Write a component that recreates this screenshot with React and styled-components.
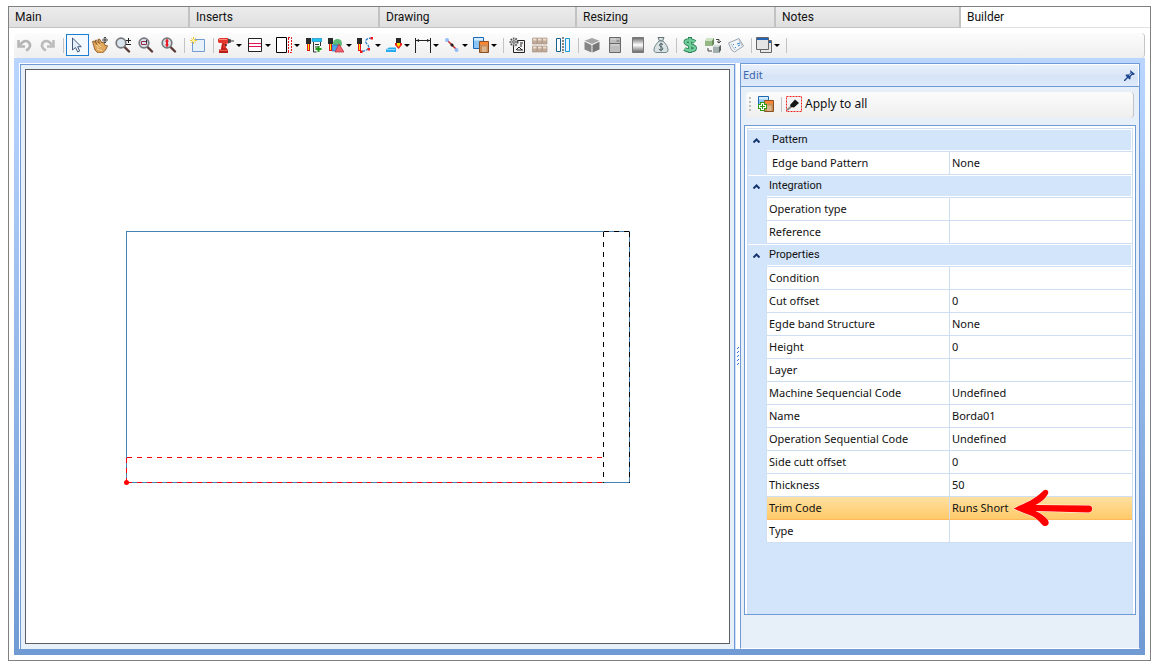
import React from "react";
import styled, { createGlobalStyle, css } from "styled-components";

const GlobalStyle = createGlobalStyle`
  * { box-sizing: border-box; }
  body {
    margin: 0;
    background: #fff;
    color: #111;
    font: 11px/16px "Noto Sans", "Open Sans", sans-serif;
  }
  button { font: inherit; color: inherit; }
`;

const BLUE = "#6f9ad6";
const PANEL = "#e7eff9";
const FILL = "#d3e5fb";
const LINE = "#cfdff3";

const Page = styled.div`
  display: flex;
  min-height: 100vh;
  padding: 6px 15px 9px 8px;
`;

const Window = styled.main`
  flex: 1;
  min-width: 0;
  display: flex;
  flex-direction: column;
  border: 1px solid #808080;
`;

const TabBar = styled.nav`
  display: grid;
  grid-template-columns: 181fr 190fr 197fr 199fr 185fr 189fr;
  height: 21px;
`;

const Tab = styled.button`
  min-width: 0;
  padding: 0 6px;
  border: 0;
  border-right: ${(p) => (p.$active ? "0" : "2px solid #c2c2c2")};
  border-bottom: 1px solid ${(p) => (p.$active ? "#e2e2e2" : "#c2c2c2")};
  background: ${(p) => (p.$active ? "#fff" : "linear-gradient(#ececec, #dfdfdf)")};
  font-family: Roboto, sans-serif;
  font-size: 12px;
  line-height: 20px;
  text-align: left;
`;

const Body = styled.div`
  flex: 1;
  display: flex;
  flex-direction: column;
  padding: 5px 5px;
`;

const strip = css`
  display: flex;
  align-items: center;
  background: linear-gradient(#fcfcfc, #efefef);
  border-radius: 4px;
  border-right: 1px solid #c4c4c4;
`;

const Toolbar = styled.div`
  ${strip}
  height: 25px;
  padding-bottom: 1px;
`;

const ToolButton = styled.button`
  flex: none;
  display: flex;
  align-items: center;
  gap: 2px;
  width: ${(p) => (p.$menu ? 29 : 23)}px;
  height: 22px;
  padding: 0 0 0 ${(p) => (p.$menu ? 1 : 2)}px;
  border: 1px solid ${(p) => (p.$active ? "#1a7fd4" : "transparent")};
  background: ${(p) => (p.$active ? "#f4f9fe" : "transparent")};
`;

const Caret = styled.span`
  border: 3px solid transparent;
  border-top-color: #000;
  border-bottom: 0;
`;

const Separator = styled.span`
  flex: none;
  width: 1px;
  height: 15px;
  margin: 0 2px 0 3px;
  background: #c3c3c3;
`;

const Frame = styled.div`
  flex: 1;
  display: flex;
  padding: 5px 5px 6px;
  background: linear-gradient(#bad6ff, #6f9ad3);
`;

const Workspace = styled.div`
  flex: 1;
  min-width: 0;
  display: flex;
  background: #fff;
`;

const DrawingPanel = styled.section`
  flex: 1;
  min-width: 0;
  display: flex;
  margin: 1px 0 0 1px;
  padding: 4px 4px 5px;
  border: 1px solid ${BLUE};
  border-bottom: 0;
  background: ${PANEL};
`;

const Canvas = styled.div`
  flex: 1;
  min-width: 0;
  display: flex;
  align-items: center;
  justify-content: center;
  border: 1px solid #5f6066;
  background: #fff;
  overflow: hidden;
`;

const Splitter = styled.div`
  flex: none;
  width: 5px;
  display: flex;
  align-items: center;
  border-left: 1px solid #cfe0fa;
`;

const EditPanel = styled.aside`
  flex: none;
  width: 400px;
  display: flex;
  flex-direction: column;
  border: 1px solid ${BLUE};
  border-bottom-color: #fff;
  background: ${PANEL};
`;

const PanelHeader = styled.header`
  display: flex;
  align-items: center;
  justify-content: space-between;
  height: 23px;
  padding: 0 4px 0 2px;
  border-bottom: 1px solid ${BLUE};
  box-shadow: inset 0 1px #fff, inset -1px 0 #fff;
  background: linear-gradient(#eaf1fb, #d6e4f7 60%, #dfebfa);
`;

const PanelTitle = styled.h2`
  margin: 0;
  color: #3c66ad;
  font-size: 11px;
  font-weight: 400;
`;

const PinButton = styled.button`
  display: flex;
  padding: 0;
  border: 0;
  background: none;
`;

const PanelToolbar = styled.div`
  ${strip}
  height: 26px;
  margin: 5px 5px 0;
  padding: 0 0 2px 3px;
`;

const Grip = styled.svg`
  flex: none;
  margin-right: 4px;
`;

const ApplyButton = styled.button`
  display: flex;
  align-items: center;
  gap: 3px;
  padding: 0;
  border: 0;
  margin-left: 2px;
  background: none;
  font-size: 12px;
`;

const Properties = styled.div`
  flex: 1;
  margin: 7px 3px 33px;
  padding: 2px 2px 0;
  border: 1px solid ${BLUE};
  background: #fff;
  display: flex;
`;

const PropertyArea = styled.div`
  flex: 1;
  border: 1px solid ${LINE};
  border-bottom: 0;
  background: ${FILL};
`;

const Table = styled.table`
  width: 100%;
  table-layout: fixed;
  border-collapse: separate;
  border-spacing: 0;
`;

const GutterCol = styled.col`
  width: 19px;
`;
const NameCol = styled.col`
  width: 183px;
`;

const Gutter = styled.td`
  height: 23px;
  padding: 0;
  background: ${FILL};
  box-shadow: ${(p) => (p.$head ? "inset 0 1px #fff" : `inset -1px 0 ${LINE}`)};
`;

const Category = styled.th`
  height: 23px;
  padding: 0 0 0 ${(p) => (p.$deep ? 5 : 2)}px;
  border-bottom: 1px solid ${LINE};
  box-shadow: inset 0 1px #fff, inset 0 -1px #fff, inset -1px 0 #fff;
  font-family: Roboto, sans-serif;
  font-weight: 400;
  text-align: left;
`;

const rowFill = css`
  background: ${(p) => (p.$selected ? "linear-gradient(#ffe0a0, #ffca68)" : "#fff")};
  border-bottom: 1px solid ${(p) => (p.$selected ? "#ffb95c" : LINE)};
`;

const Name = styled.th`
  ${rowFill}
  height: 23px;
  padding: 0 0 0 ${(p) => (p.$deep ? 5 : 2)}px;
  border-right: 1px solid ${LINE};
  font-weight: 400;
  text-align: left;
  white-space: nowrap;
`;

const Value = styled.td`
  ${rowFill}
  position: ${(p) => (p.$selected ? "relative" : "static")};
  z-index: ${(p) => (p.$selected ? 1 : "auto")};
  padding: 0 2px;
`;

const Pointer = styled.svg`
  position: absolute;
  left: 63px;
  top: -8px;
  overflow: visible;
`;

const CollapseButton = styled.button`
  display: flex;
  align-items: center;
  justify-content: center;
  width: 17px;
  height: 20px;
  padding: 0;
  border: 0;
  background: none;
`;

const Drawing = styled.svg`
  flex: none;
  overflow: visible;
`;

const Icon = ({ children }) => (
  <svg width="16" height="16" viewBox="0 0 16 16" fill="none" aria-hidden="true">
    {children}
  </svg>
);

const Lens = ({ children }) => (
  <Icon>
    <path d="M9.500 10l4.500 4.500" stroke="#5b3a36" strokeWidth="2.400" strokeLinecap="round" />
    <circle cx="6" cy="6" r="4.800" fill="#d9e4ec" stroke="#77787c" strokeWidth="1.700" />
    {children}
  </Icon>
);

const Tip = ({ x = 0, y = 0 }) => (
  <g transform={`translate(${x} ${y})`}>
    <path d="M0 0h5v6H0z" fill="#292929" />
    <path d="M1 6h3v7H1z" fill="#e11b1b" />
    <path d="M2 6h1v6H2z" fill="#ffe500" />
  </g>
);

const Moulding = () => (
  <>
    <path d="M.5.500h10v11H.5z" fill="#8cc4f5" stroke="#1b68b4" />
    <path d="M1 1h9v2.500H1z" fill="#d5ecff" />
    <path d="M6.500 4.500h9v11h-9z" fill="#c98d57" stroke="#8a4f22" />
    <path d="M7 5h8v2.500H7z" fill="#ff8734" />
    <path d="M9 9.500h4.500V15H9z" fill="#dcb48c" />
  </>
);

const ICONS = {
  undo: (
    <Icon>
      <path d="M1.500 3v6.500H8" stroke="#b5b5b5" strokeWidth="2.500" />
      <path d="M3 8c2.500-4 6-5 8.500-3 3 3 1.500 6.500-2.500 8.500" stroke="#b5b5b5" strokeWidth="2.600" />
    </Icon>
  ),
  redo: (
    <Icon>
      <path d="M13.500 3v6.500H7" stroke="#bcbcbc" strokeWidth="2.500" />
      <path d="M12 8c-2.500-4-6-5-8.500-3-3 3-1.500 6.500 2.500 8.500" stroke="#bcbcbc" strokeWidth="2.600" />
    </Icon>
  ),
  cursor: (
    <Icon>
      <path d="M3.500 1v12l3-2.500 2.200 4.500 2-1-2-4.300h3.600z" fill="#e5edf8" stroke="#455878" />
    </Icon>
  ),
  hand: (
    <Icon>
      <path d="M.5 4.500L2 4l3 3.500L3 3.500 4.500 3l3 3.500L6 2.500 7.500 2l2.500 4 .5-1 1.500 1 1.500 3 1-1 1 1-2 4-3 3H6l-3-3z" fill="#e0a85c" stroke="#8a5621" strokeWidth=".9" />
      <path d="M4 8l3 3M6 6.500l3 3.500M5 12l5 1.500" stroke="#f7d69b" />
      <path d="M13 0v6M10 3h6" stroke="#333" />
      <path d="M11.500 1.500L13 0l1.500 1.500M11.500 4.500L13 6l1.500-1.500" stroke="#333" strokeWidth=".8" />
    </Icon>
  ),
  zoomPm: (
    <Lens>
      <path d="M11 3.500h5M13.500 1v5M11 7.500h5" stroke="#222" />
    </Lens>
  ),
  zoomWin: (
    <Lens>
      <path d="M3.500 4.500h5v3h-5z" stroke="#9d2948" />
      <path d="M8.500 3v3" stroke="#333" />
    </Lens>
  ),
  zoomFit: (
    <Lens>
      <path d="M6 2.500v7" stroke="#ed1c24" strokeWidth="2" />
      <path d="M3.800 4.500L6 2l2.200 2.500zM3.800 7.500L6 10l2.200-2.500z" fill="#ed1c24" />
    </Lens>
  ),
  blank: (
    <Icon>
      <path d="M2.500 2.500h12v12h-12z" fill="#e6f1fc" stroke="#719bd1" />
      <path d="M3.500 0v7M0 3.500h7M1.200 1.200l4.600 4.600M5.800 1.200L1.200 5.800" stroke="#f0c335" />
      <circle cx="3.500" cy="3.500" r="1.500" fill="#fff5a7" />
    </Icon>
  ),
  drill: (
    <Icon>
      <path d="M0 2l2-1h8v5.500H8.500L8 11h1v2H3V11l1-5H1L0 5z" fill="#e5362c" />
      <path d="M1 2.500h8" stroke="#ff8d80" />
      <path d="M5 6.500l-.5 5M3 12h5" stroke="#a81d17" />
      <path d="M8 7v2" stroke="#333" strokeWidth="1.500" />
      <path d="M10 1.500l3 1v3l-3 1z" fill="#4a4a4a" />
      <path d="M13 4h3" stroke="#777" strokeWidth="1.500" />
      <path d="M1 12.500h9V16H1z" fill="#b51f18" />
      <path d="M1.500 13.500h8" stroke="#ee5a4e" />
    </Icon>
  ),
  band: (
    <Icon>
      <path d="M1.500 1.500h13v13h-13z" fill="#fff" stroke="#222" />
      <path d="M2 6.500h12M2 9.500h12" stroke="#e71357" />
    </Icon>
  ),
  edge: (
    <Icon>
      <path d="M.5.500h10v15H.5z" fill="#fff" stroke="#000" />
      <path d="M12 .5h3.500v15H12" stroke="#e71313" strokeDasharray="2 1" />
      <path d="M12.500 1v14" stroke="#e71313" strokeDasharray="2 1" />
    </Icon>
  ),
  addTool: (
    <Icon>
      <Tip y={1} />
      <path d="M6 1.500h10v3H6z" fill="#19c6f4" stroke="#1278b4" strokeWidth=".6" />
      <path d="M7.500 5v10h3M14.500 5v4M9 7.500h4M9 10h3" stroke="#333" />
      <path d="M12.500 9v6M9.500 12h6" stroke="#219a19" strokeWidth="2" />
    </Icon>
  ),
  shapes: (
    <Icon>
      <circle cx="9.500" cy="6.500" r="4.500" fill="#5bbd77" />
      <path d="M4 8h6v6H4z" fill="#4aa5ed" stroke="#246fb4" strokeWidth=".7" />
      <path d="M11 7l5 8H7z" fill="#ed6571" stroke="#b62736" strokeWidth=".7" />
      <Tip x={0} y={1} />
    </Icon>
  ),
  path: (
    <Icon>
      <Tip y={1} />
      <path d="M15 1c-6 0-8 3-5 6s3 6-6 7.500" stroke="#247bd0" strokeWidth="1.200" strokeDasharray="3 1" />
      <path d="M13.500 0H16v2.500h-2.500zM10.500 11H13v2.500h-2.500zM3 13.500h2.500V16H3z" fill="#f01818" />
    </Icon>
  ),
  surface: (
    <Icon>
      <path d="M0 12.500l3-2h7v4.500H0z" fill="#28aaf3" />
      <path d="M1 12.500h8" stroke="#8bdbff" />
      <path d="M10 1h5v5h-5z" fill="#292929" />
      <path d="M9 6h7v2l-3.500 4L9 8z" fill="#ef1c1c" />
      <path d="M11 6h3v2l-1.500 2L11 8z" fill="#ffe500" />
    </Icon>
  ),
  dimension: (
    <Icon>
      <path d="M.5 1v15M15.500 1v15M1 3.500h14" stroke="#222" />
      <path d="M1 3.500L4 2v3zM15 3.500L12 2v3z" fill="#222" />
    </Icon>
  ),
  line: (
    <Icon>
      <path d="M3 3l10 10" stroke="#c62830" strokeWidth="1.500" />
      <path d="M7 7l2 2" stroke="#222" strokeWidth="2.500" />
      <circle cx="3" cy="3" r="2" fill="#94bdf5" />
      <circle cx="12.500" cy="13" r="2" fill="#94bdf5" />
    </Icon>
  ),
  moulding: (
    <Icon>
      <Moulding />
    </Icon>
  ),
  gearPlan: (
    <Icon>
      <path d="M4.500 3.500h11v12h-11z" fill="#f4f4f4" stroke="#222" />
      <path d="M7 13l3-3 3 3M12 7v3M8 13h6M11 6h3" stroke="#222" />
      <circle cx="5" cy="5" r="3.500" fill="#ddd" stroke="#555" strokeWidth="2" strokeDasharray="1.500 1" />
      <circle cx="5" cy="5" r="1.300" fill="#fff" stroke="#555" />
    </Icon>
  ),
  boxes: (
    <Icon>
      {[1, 9].map((y) =>
        [0, 5, 10].map((x) => (
          <g key={`${x}-${y}`}>
            <path d={`M${x + 0.5} ${y}h4.500v6h-4.500z`} fill="#c2ab98" stroke="#9d8777" strokeWidth=".6" />
            <path d={`M${x + 1} ${y + 1.5}h3.500`} stroke="#eadccf" strokeWidth="2" />
          </g>
        ))
      )}
    </Icon>
  ),
  mirror: (
    <Icon>
      <path d="M1.500 1.500h4v13h-4z" fill="#fff" stroke="#17628d" />
      <path d="M10.500 1.500h4v13h-4z" fill="#e4f5ff" stroke="#199ae0" />
      <path d="M8 0v16" stroke="#111" strokeDasharray="2 1" />
    </Icon>
  ),
  cube: (
    <Icon>
      <path d="M8 1l7.500 2.700L8 7 .5 3.700z" fill="#a5a5a5" />
      <path d="M.5 4.700L7.500 8v7.500L.5 12.500z" fill="#858585" />
      <path d="M15.500 4.700L8.500 8v7.500l7-3z" fill="#777" />
    </Icon>
  ),
  fridge: (
    <Icon>
      <path d="M2.500.5h11v15h-11z" fill="#bdbdbd" stroke="#696969" />
      <path d="M3 6.500h10M9.500 4h3" stroke="#666" />
      <path d="M4 2h5M4 8h8" stroke="#ddd" />
    </Icon>
  ),
  steel: (
    <Icon>
      <defs>
        <linearGradient id="steel" x2="0" y2="1">
          <stop stopColor="#666" />
          <stop offset=".5" stopColor="#fff" />
          <stop offset="1" stopColor="#606060" />
        </linearGradient>
      </defs>
      <path d="M2.500.5h11v15h-11z" fill="url(#steel)" stroke="#777" />
    </Icon>
  ),
  bag: (
    <Icon>
      <path d="M5 .5h6L9.500 4h-3z" fill="#d7dedf" stroke="#667578" />
      <path d="M6 4h4c3 3 5 6 5 9 0 2-1 2.500-3 2.500H4C2 15.500 1 15 1 13c0-3 2-6 5-9z" fill="#dae2e3" stroke="#71858a" />
      <path d="M10 7.500C8 6 6 7 6.500 8.500S10 10 9.800 11.800 7 13.500 5.800 12M8 5.800v8.500" stroke="#465d63" />
    </Icon>
  ),
  dollar: (
    <Icon>
      <path d="M13 5C10 2.500 3.500 2.500 3.500 5.300S13 8 13 11s-7 3.500-10.500.8M8 0v16" stroke="#2c7d56" strokeWidth="4" />
      <path d="M13 5C10 2.500 3.500 2.500 3.500 5.300S13 8 13 11s-7 3.500-10.500.8M8 1v14" stroke="#6fcf9a" strokeWidth="2.400" />
    </Icon>
  ),
  swapBoxes: (
    <Icon>
      <path d="M0 4l2-3h7v6L7 9H0z" fill="#94b784" />
      <path d="M0 4l2-3h7L7 4z" fill="#cfe3c5" />
      <path d="M7 4l2-3v6L7 9z" fill="#6a8a5c" />
      <path d="M8 10l2-2h6v5l-2 3H8z" fill="#a3afad" />
      <path d="M8 10l2-2h6l-2 2z" fill="#d5dedc" />
      <path d="M14 10l2-2v5l-2 3z" fill="#56625f" />
      <path d="M11 2.500h3V6M12 4.500L14 6l2-2M3 11v3h4" stroke="#444" />
    </Icon>
  ),
  tag: (
    <Icon>
      <path d="M.5 6L11 1.500l4.500 7.500-9 6-3-2z" fill="#f1f5f8" stroke="#9aa5b0" />
      <path d="M3 7l4 6M11 3l3 6" stroke="#b8c1c9" />
      <path d="M5 7l1 1M7 10l1 1M9 7l3-1M10 9l2-1" stroke="#3985d1" />
    </Icon>
  ),
  windows: (
    <Icon>
      <path d="M4.500 3.500h11v12h-11z" fill="#e7e7e7" stroke="#666" />
      <path d="M5 4h10v2H5z" fill="#2763b3" />
      <path d="M.5.500h12v12H.5z" fill="#e5e5e5" stroke="#666" />
      <path d="M1 1h11v2H1z" fill="#2763b3" />
    </Icon>
  ),
  addMoulding: (
    <Icon>
      <Moulding />
      <path d="M4.500 6v9M0 10.500h9" stroke="#2f9a12" strokeWidth="5" />
      <path d="M4.500 7v7M1 10.500h7" stroke="#fff" strokeWidth="3" />
      <path d="M4.500 8v5M2 10.500h5" stroke="#2f9a12" />
    </Icon>
  ),
  brush: (
    <Icon>
      <path d="M.5.500h15v15H.5z" fill="#f3f3f3" stroke="#f32020" strokeDasharray="2 1" />
      <path d="M1 14l5-4" stroke="#888" strokeWidth="2" />
      <path d="M4 9l5-5.500 4 3.500-5 4.500-3-.5z" fill="#161616" />
    </Icon>
  ),
};

const TOOLS = [
  { icon: "undo", label: "Undo" },
  { icon: "redo", label: "Redo" },
  null,
  { icon: "cursor", label: "Select", active: true },
  { icon: "hand", label: "Pan" },
  { icon: "zoomPm", label: "Zoom" },
  { icon: "zoomWin", label: "Zoom window" },
  { icon: "zoomFit", label: "Zoom extents" },
  null,
  { icon: "blank", label: "New" },
  null,
  { icon: "drill", label: "Drilling", menu: true },
  { icon: "band", label: "Groove", menu: true },
  { icon: "edge", label: "Edge band", menu: true },
  { icon: "addTool", label: "Add machining" },
  { icon: "shapes", label: "Shapes", menu: true },
  { icon: "path", label: "Path", menu: true },
  { icon: "surface", label: "Surface", menu: true },
  { icon: "dimension", label: "Dimension", menu: true },
  { icon: "line", label: "Line", menu: true },
  { icon: "moulding", label: "Layers", menu: true },
  null,
  { icon: "gearPlan", label: "Settings" },
  { icon: "boxes", label: "Materials" },
  { icon: "mirror", label: "Mirror" },
  null,
  { icon: "cube", label: "Module" },
  { icon: "fridge", label: "Appliance" },
  { icon: "steel", label: "Finish" },
  { icon: "bag", label: "Budget" },
  null,
  { icon: "dollar", label: "Price" },
  { icon: "swapBoxes", label: "Replace" },
  { icon: "tag", label: "Label" },
  null,
  { icon: "windows", label: "Windows", menu: true },
  null,
];

const TABS = ["Main", "Inserts", "Drawing", "Resizing", "Notes", "Builder"];

const GROUPS = [
  { title: "Pattern", deep: true, rows: [["Edge band Pattern", "None"]] },
  { title: "Integration", rows: [["Operation type", ""], ["Reference", ""]] },
  {
    title: "Properties",
    rows: [
      ["Condition", ""],
      ["Cut offset", "0"],
      ["Egde band Structure", "None"],
      ["Height", "0"],
      ["Layer", ""],
      ["Machine Sequencial Code", "Undefined"],
      ["Name", "Borda01"],
      ["Operation Sequential Code", "Undefined"],
      ["Side cutt offset", "0"],
      ["Thickness", "50"],
      ["Trim Code", "Runs Short"],
      ["Type", ""],
    ],
  },
];

const SELECTED = "Trim Code";

const Tool = ({ icon, label, active, menu }) => (
  <ToolButton type="button" aria-label={label} aria-haspopup={menu ? "menu" : undefined} $active={active} $menu={menu}>
    {ICONS[icon]}
    {menu && <Caret />}
  </ToolButton>
);

const PartDrawing = () => (
  <Drawing width="505" height="253" viewBox="0 0 505 253" fill="none" role="img" aria-label="Part outline">
    <g shapeRendering="crispEdges">
      <rect x="1.500" y="1.500" width="503" height="251" stroke="#4682b4" />
      <path d="M478.500 1.500v251M504.500 1.500v251M478.500 1.500h26" stroke="#000" strokeDasharray="5 5" />
      <path d="M1.500 227.500h477M1.500 252.500h477M1.500 227.500v25" stroke="#f00" strokeDasharray="5 5" />
    </g>
    <circle cx="1.500" cy="252.500" r="2.500" fill="#f00" />
  </Drawing>
);

const RedPointer = () => (
  <Pointer width="82" height="38" viewBox="0 0 82 38" aria-hidden="true">
    <path
      d="M.5 19.500C12 14 21 11 29 3c2-2 4-3 5.500-1.500 2 2 0 4.500-2 7C30 11.500 26 14 22.500 16l53 .5c5 0 5 6.500 0 7L22.500 22c5 2 9 5 12 8.500 3 4 0 8-4.500 6-3-3-5-6-10-9-6-3-13-4.500-19.500-8z"
      fill="#f00"
      stroke="#fff"
      strokeWidth="1"
      paintOrder="stroke"
    />
  </Pointer>
);

export default function App() {
  return (
    <>
      <GlobalStyle />
      <Page>
        <Window>
          <TabBar>
            {TABS.map((label) => (
              <Tab key={label} type="button" $active={label === "Builder"}>
                {label}
              </Tab>
            ))}
          </TabBar>
          <Body>
            <Toolbar role="toolbar">
              {TOOLS.map((tool, i) => (tool ? <Tool key={i} {...tool} /> : <Separator key={i} />))}
            </Toolbar>
            <Frame>
              <Workspace>
                <DrawingPanel>
                  <Canvas>
                    <PartDrawing />
                  </Canvas>
                </DrawingPanel>
                <Splitter role="separator" aria-orientation="vertical">
                  <svg width="4" height="20" viewBox="0 0 4 20" aria-hidden="true">
                    {[1, 5, 9, 13, 17].map((y) => (
                      <path key={y} d={`M1 ${y + 1}h1v1H1zM2 ${y}h1v1H2z`} fill="#2f6fd0" />
                    ))}
                  </svg>
                </Splitter>
                <EditPanel>
                  <PanelHeader>
                    <PanelTitle>Edit</PanelTitle>
                    <PinButton type="button" aria-label="Pin panel">
                      <svg width="11" height="11" viewBox="0 0 11 11" aria-hidden="true">
                        <path d="M6 0l5 4-1.500 1L8 5 6.500 7v2L5.500 9.500 4 8 1 11H0v-1l3-3-1.500-1.500L2 4.500h2.500L6.500 3z" fill="#1c458f" />
                        <path d="M5 5.500L7.500 3.500" stroke="#dbe7f8" />
                      </svg>
                    </PinButton>
                  </PanelHeader>
                  <PanelToolbar role="toolbar">
                    <Grip width="2" height="16" viewBox="0 0 2 16" aria-hidden="true">
                      <path d="M0 1h2v2H0zM0 5h2v2H0zM0 9h2v2H0zM0 13h2v2H0z" fill="#bdbdbd" />
                    </Grip>
                    <Tool icon="addMoulding" label="Add layer" />
                    <Separator />
                    <ApplyButton type="button">
                      {ICONS.brush}
                      Apply to all
                    </ApplyButton>
                  </PanelToolbar>
                  <Properties>
                    <PropertyArea>
                      <Table>
                        <colgroup>
                          <GutterCol />
                          <NameCol />
                          <col />
                        </colgroup>
                        {GROUPS.map(({ title, deep, rows }) => (
                          <tbody key={title}>
                            <tr>
                              <Gutter $head>
                                <CollapseButton type="button" aria-label={`Collapse ${title}`}>
                                  <svg width="7" height="5" viewBox="0 0 7 5" fill="none" aria-hidden="true">
                                    <path d="M.5 4.500l3-3 3 3" stroke="#17366f" strokeWidth="2" />
                                  </svg>
                                </CollapseButton>
                              </Gutter>
                              <Category colSpan={2} $deep={deep}>
                                {title}
                              </Category>
                            </tr>
                            {rows.map(([name, value]) => (
                              <tr key={name}>
                                <Gutter />
                                <Name scope="row" $deep={deep} $selected={name === SELECTED}>
                                  {name}
                                </Name>
                                <Value $selected={name === SELECTED}>
                                  {value}
                                  {name === SELECTED && <RedPointer />}
                                </Value>
                              </tr>
                            ))}
                          </tbody>
                        ))}
                      </Table>
                    </PropertyArea>
                  </Properties>
                </EditPanel>
              </Workspace>
            </Frame>
          </Body>
        </Window>
      </Page>
    </>
  );
}
